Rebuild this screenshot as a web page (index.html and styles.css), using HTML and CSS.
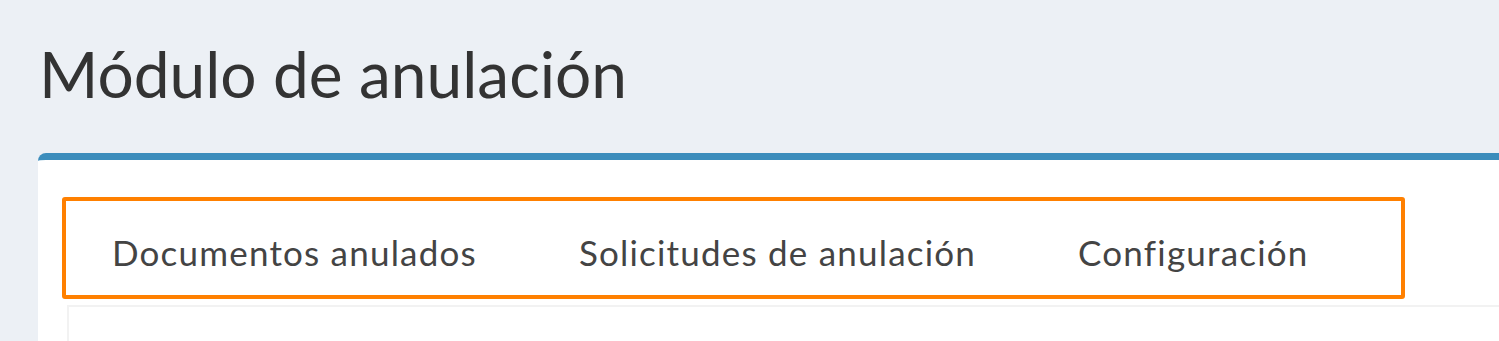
FILE: index.html
```html
<!DOCTYPE html>
<html lang="es">
<head>
<meta charset="utf-8">
<title>Módulo de anulación</title>
<link rel="stylesheet" href="styles.css">
</head>
<body>
<div class="page">
  <header class="content-header">
    <h1 class="title">Módulo de anulación</h1>
  </header>
  <section class="box">
    <div class="highlight">
      <ul class="tabs">
        <li class="tab">Documentos anulados</li>
        <li class="tab">Solicitudes de anulación</li>
        <li class="tab">Configuración</li>
      </ul>
    </div>
    <div class="tab-content"></div>
  </section>
</div>
</body>
</html>
```
FILE: styles.css
```css
html, body {
  margin: 0;
  padding: 0;
  background: #ecf0f5;
  overflow: hidden;
}
.page {
  width: 1499px;
  height: 341px;
  overflow: hidden;
  font-family: "Lato", "Liberation Sans", sans-serif;
}
.content-header {
  padding: 38px 0 0 39px;
  height: 153px;
  box-sizing: border-box;
}
.title {
  margin: 0;
  font-weight: 400;
  font-size: 64px;
  line-height: 72px;
  color: #333;
}
.box {
  margin-left: 38px;
  width: 1500px;
  height: 250px;
  background: #fff;
  border-top: 7px solid #3c8dbc;
  border-top-left-radius: 8px;
  padding: 37px 0 0 24px;
  box-sizing: border-box;
}
.highlight {
  width: 1343px;
  height: 102px;
  box-sizing: border-box;
  border: 4px solid #ff8000;
  border-radius: 3px;
}
.tabs {
  list-style: none;
  margin: 0;
  padding: 0;
  display: flex;
  gap: 9px;
}
.tab {
  padding: 31px 47px 0 46px;
  font-size: 35px;
  letter-spacing: 1.2px;
  line-height: 40px;
  color: #444;
}
.tab-content {
  margin: 6px 0 0 5px;
  height: 80px;
  border-top: 2px solid #f2f2f2;
  border-left: 2px solid #f2f2f2;
}
```
